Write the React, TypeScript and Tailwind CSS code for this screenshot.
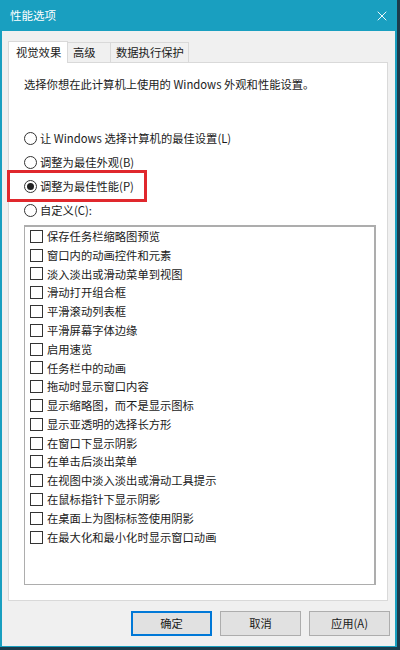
import { X } from 'lucide-react';

const items = [
  '保存任务栏缩略图预览',
  '窗口内的动画控件和元素',
  '淡入淡出或滑动菜单到视图',
  '滑动打开组合框',
  '平滑滚动列表框',
  '平滑屏幕字体边缘',
  '启用速览',
  '任务栏中的动画',
  '拖动时显示窗口内容',
  '显示缩略图，而不是显示图标',
  '显示亚透明的选择长方形',
  '在窗口下显示阴影',
  '在单击后淡出菜单',
  '在视图中淡入淡出或滑动工具提示',
  '在鼠标指针下显示阴影',
  '在桌面上为图标标签使用阴影',
  '在最大化和最小化时显示窗口动画',
];

const Radio = ({ checked, label }: { checked?: boolean; label: string }) => (
  <div className="flex items-center h-[24px]">
    <span className="w-[13px] h-[13px] rounded-full border border-[#333] bg-white flex items-center justify-center">
      {checked && <span className="w-[7px] h-[7px] rounded-full bg-[#222]" />}
    </span>
    <span className="ml-[3px]">{label}</span>
  </div>
);

export default function App() {
  return (
    <div
      className="w-[400px] h-[650px] bg-[#1c3b4c] text-[11.3px] text-[#1a1a1a] overflow-hidden"
      style={{ fontFamily: '"Noto Sans CJK SC", "Noto Sans", sans-serif' }}
    >
      <div className="w-[397px] h-[647px] bg-[#199fc0] flex flex-col">
        {/* Title bar */}
        <div className="h-[31px] flex items-center justify-between pl-[10px] pr-[7px] text-white text-[11.5px]">
          <span>性能选项</span>
          <X className="w-[16px] h-[16px]" strokeWidth={1.4} />
        </div>

        {/* Body */}
        <div className="flex-1 mx-[2px] mb-[1px] bg-[#f0f0f0] flex flex-col">
          {/* Tabs */}
          <div className="flex items-end h-[31px] pl-[6px] whitespace-nowrap">
            <div className="h-[22px] w-[60px] pl-[7px] flex items-center bg-white border border-b-0 border-[#d9d9d9] relative top-[1px] z-10">
              视觉效果
            </div>
            <div className="h-[20px] w-[43px] pl-[5px] flex items-center bg-[#f0f0f0] border border-b-0 border-l-0 border-[#d9d9d9]">
              高级
            </div>
            <div className="h-[20px] w-[78px] pl-[5px] flex items-center bg-[#f0f0f0] border border-b-0 border-l-0 border-[#d9d9d9]">
              数据执行保护
            </div>
          </div>

          {/* Panel */}
          <div className="ml-[6px] mr-[7px] h-[539px] bg-white border border-[#d9d9d9] flex flex-col pl-[15px] pr-[12px]">
            <div className="mt-[13px] leading-[16px]">选择你想在此计算机上使用的 Windows 外观和性能设置。</div>

            <div className="mt-[34px] flex flex-col">
              <Radio label="让 Windows 选择计算机的最佳设置(L)" />
              <Radio label="调整为最佳外观(B)" />
              <div className="relative">
                <div className="absolute left-[-17px] top-[-4px] w-[140px] h-[32px] border-[3px] border-[#e0282d]" />
                <Radio checked label="调整为最佳性能(P)" />
              </div>
              <Radio label="自定义(C):" />
            </div>

            <div className="mt-[3px] w-[352px] h-[360px] border border-[#adadad] border-t-2 border-r-2 pl-[5px]">
              {items.map((t) => (
                <div key={t} className="flex items-center h-[18.8px]">
                  <span className="w-[13px] h-[13px] border border-[#333] bg-white" />
                  <span className="ml-[4px]">{t}</span>
                </div>
              ))}
            </div>
          </div>

          {/* Buttons */}
          <div className="flex justify-end gap-[8px] pr-[5px] mt-[10px]">
            <button className="w-[81px] h-[25px] bg-[#e1e1e1] border-2 border-[#0078d7]">确定</button>
            <button className="w-[81px] h-[25px] bg-[#e1e1e1] border border-[#adadad]">取消</button>
            <button className="w-[81px] h-[25px] bg-[#e1e1e1] border border-[#adadad]">应用(A)</button>
          </div>
        </div>
      </div>
    </div>
  );
}
